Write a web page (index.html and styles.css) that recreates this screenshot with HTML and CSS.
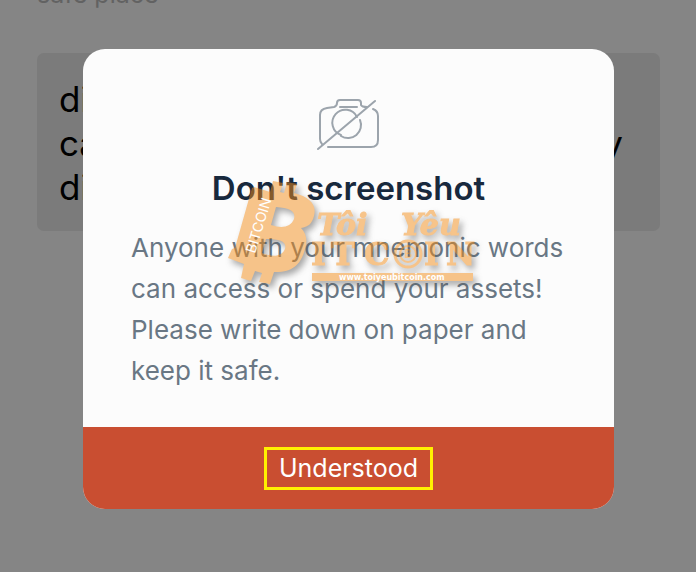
FILE: index.html
```html
<!DOCTYPE html>
<html lang="en">
<head>
    <meta charset="UTF-8" />
    <meta name="viewport" content="width=device-width, initial-scale=1.0" />
    <title>Don't screenshot</title>
    <link rel="stylesheet" href="styles.css">
</head>
<body>
    <main class="page">
        <p class="hint">safe place</p>
        <div class="words">
            <p class="line">di</p>
            <p class="line"><span>ca</span><span>y</span></p>
            <p class="line">di</p>
        </div>
    </main>

    <div class="overlay">
        <section class="modal" role="dialog" aria-labelledby="modalTitle">
            <div class="content">
                <svg class="camera" viewBox="0 0 64 54" aria-hidden="true">
                    <path d="M5 46Q3 44 3 41V17Q3 11 10 10L17 9Q20 8 20 5Q20 2 23 2H41Q44 2 44 5V7Q45 9 50 9M56 11Q61 13 61 18V42Q61 49 54 49H11" />
                    <path d="M23 9H40M24 37A13 13 0 1 1 40 19M43 22A13 13 0 0 1 24 38" />
                    <path d="M1 51L58 3" />
                </svg>
                <h1 class="title" id="modalTitle">Don't screenshot</h1>
                <p class="message">Anyone with your mnemonic words can access or spend your assets! Please write down on paper and keep it safe.</p>
            </div>
            <button class="confirm" type="button"><span class="confirm-label">Understood</span></button>

            <svg class="watermark" viewBox="0 0 252 108" aria-hidden="true">
                <g class="watermark-ink">
                    <path fill-rule="evenodd" d="M27 10L29 9L45 14L48 3L58 5L55 14L59 15L62 4L72 6L69 15C85 19 92 27 89 38C87 46 83 49 76 50C81 55 83 62 80 71C76 87 67 94 51 94L49 94L45 106L34 104L37 95L30 93L26 103L16 100L19 86L3 80L7 71L10 70ZM51 29L46 47C57 51 66 49 69 41C71 33 65 30 51 29ZM41 61L37 75C49 80 57 78 60 71C62 64 56 61 41 61Z" />
                    <text class="script" x="92" y="57">Tôi</text>
                    <text class="script" x="176" y="57">Yêu</text>
                    <text class="slab" x="86" y="87">I</text>
                    <text class="slab" x="106" y="87">T</text>
                    <text class="slab" x="139" y="87">C</text>
                    <circle class="coin" cx="183" cy="76" r="13" />
                    <circle class="coin-inner" cx="183" cy="76" r="8" />
                    <text class="coin-mark" x="179" y="80">B</text>
                    <text class="slab" x="199" y="87">I</text>
                    <text class="slab" x="221" y="87">N</text>
                    <rect x="87" y="95" width="161" height="8" />
                </g>
                <text class="side" transform="translate(30 76) rotate(-73)">BITCOIN</text>
                <text class="site" x="114" y="102">www.toiyeubitcoin.com</text>
            </svg>
        </section>
    </div>
</body>
</html>
```

FILE: styles.css
```css
* {
  box-sizing: border-box;
}

body,
h1,
p {
  margin: 0;
  padding: 0;
}

body {
  font-family: Inter, 'Liberation Sans', sans-serif;
  background-color: #858585;
  min-height: 100vh;
  overflow: hidden;
}

.page {
  padding: 0 36px 0 37px;
}

.hint {
  margin-top: -22px;
  margin-bottom: 43px;
  font-size: 25px;
  line-height: 32px;
  color: #626262;
}

.words {
  padding: 24px 37px 22px 22px;
  border-radius: 7px;
  background-color: #7b7b7b;
  color: #000;
}

.line {
  display: flex;
  justify-content: space-between;
  font-size: 35px;
  line-height: 44px;
}

.overlay {
  position: fixed;
  inset: 0;
  padding: 49px 82px 0 83px;
}

.modal {
  position: relative;
  overflow: hidden;
  border-radius: 22px;
  background-color: #fcfcfc;
}

.content {
  display: flex;
  flex-direction: column;
  align-items: center;
  padding: 49px 48px 36px;
}

.camera {
  width: 64px;
  height: 54px;
  fill: none;
  stroke: #9ca4ac;
  stroke-width: 2;
  stroke-linecap: round;
  stroke-linejoin: round;
}

.title {
  margin: 16px 0 19px;
  font-size: 33px;
  font-weight: 600;
  line-height: 40px;
  color: #18293d;
}

.message {
  align-self: stretch;
  font-size: 26px;
  line-height: 41px;
  color: #697784;
}

.confirm {
  display: flex;
  justify-content: center;
  align-items: center;
  width: 100%;
  padding: 20px 20px 19px;
  border: none;
  background-color: #c94e31;
  color: #fff;
  font-family: inherit;
  font-size: 25px;
  line-height: 37px;
  cursor: pointer;
}

.confirm-label {
  padding: 0 12px;
  border: 3px solid #fff000;
}

/* Logo laid over the dialog text */
.watermark {
  position: absolute;
  top: 129px;
  left: 142px;
  width: 252px;
  height: 108px;
  overflow: visible;
  pointer-events: none;
}

.watermark-ink {
  fill: #f28c18;
  opacity: 0.5;
  filter: drop-shadow(3px 4px 3px #555);
}

.script {
  font-family: 'DejaVu Serif', serif;
  font-size: 30px;
  font-style: italic;
  font-weight: 700;
  stroke: #f28c18;
  stroke-width: 1;
}

.slab {
  font-family: 'DejaVu Serif', serif;
  font-size: 32px;
  font-weight: 700;
  stroke: #f28c18;
  stroke-width: 1;
}

.coin {
  fill: none;
  stroke: #f28c18;
  stroke-width: 3;
}

.coin-inner {
  fill: none;
  stroke: #f28c18;
  stroke-width: 2;
}

.coin-mark {
  font-size: 12px;
  font-weight: 700;
}

.side {
  fill: #fff;
  font-size: 14px;
}

.site {
  fill: #fff;
  font-family: 'DejaVu Sans', sans-serif;
  font-size: 8px;
  font-weight: 700;
}
```
